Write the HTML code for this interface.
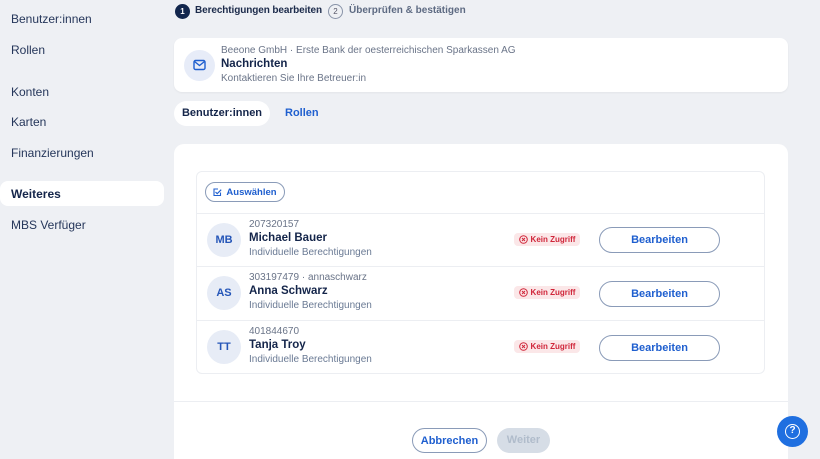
<!DOCTYPE html>
<html><head><style>
*{box-sizing:border-box;margin:0;padding:0}
html,body{width:820px;height:459px;overflow:hidden}
body{background:#eef0f4;font-family:"Liberation Sans",sans-serif;color:#1b2a4a;position:relative}
.a{position:absolute}
.nav{left:11px;font-size:12px;color:#25365a}
.btn{border:1px solid #8a9bb8;border-radius:14px;background:#fff;color:#1f5fcf;font-weight:bold;font-size:11px;display:flex;align-items:center;justify-content:center}
.row{left:197px;width:567px;height:54px;border-top:1px solid #eceef2}
.av{left:10px;top:9px;width:34px;height:34px;border-radius:50%;background:#e7ecf6;color:#2556b8;font-size:11px;font-weight:bold;display:flex;align-items:center;justify-content:center}
.id{left:52px;top:5px;font-size:10px;color:#6a7488}
.nm{left:52px;top:18px;font-size:11.5px;font-weight:bold;color:#14254a}
.sub{left:52px;top:33px;font-size:10px;color:#6a7a94}
.kz{left:317px;top:19px;height:13px;width:66px;background:#fbe7e8;border-radius:4px;color:#d0263a;font-size:8px;font-weight:bold;display:flex;align-items:center;justify-content:center;gap:3px}
</style></head><body>
<div class="a nav" style="top:12px">Benutzer:innen</div>
<div class="a nav" style="top:43px">Rollen</div>
<div class="a nav" style="top:85px">Konten</div>
<div class="a nav" style="top:115px">Karten</div>
<div class="a nav" style="top:146px">Finanzierungen</div>
<div class="a" style="left:0;top:181px;width:164px;height:25px;background:#fff;border-radius:8px"></div>
<div class="a nav" style="top:187px;font-weight:bold;color:#14254a">Weiteres</div>
<div class="a nav" style="top:218px">MBS Verfüger</div>

<div class="a" style="left:175px;top:4px;width:15px;height:15px;border-radius:50%;background:#12264d;color:#fff;font-size:8px;font-weight:bold;text-align:center;line-height:15px">1</div>
<div class="a" style="left:195px;top:5px;font-size:10px;font-weight:bold;color:#1b2a4a;letter-spacing:-0.1px">Berechtigungen bearbeiten</div>
<div class="a" style="left:317px;top:5px;font-size:9px;color:#aab">›</div>
<div class="a" style="left:328px;top:4px;width:15px;height:15px;border-radius:50%;border:1px solid #8893a8;color:#556;font-size:8px;text-align:center;line-height:13px">2</div>
<div class="a" style="left:349px;top:5px;font-size:10px;font-weight:bold;color:#5d6a82">Überprüfen &amp; bestätigen</div>

<div class="a" style="left:174px;top:38px;width:614px;height:54px;background:#fff;border-radius:8px;box-shadow:0 1px 2px rgba(0,0,0,.05)"></div>
<div class="a" style="left:184px;top:50px;width:31px;height:31px;border-radius:50%;background:#e7ecf8"></div>
<svg class="a" style="left:193px;top:59px" width="13" height="12" viewBox="0 0 13 12"><rect x="1" y="1.5" width="11" height="9" rx="1.5" fill="none" stroke="#1f5fcf" stroke-width="1.4"/><path d="M1.5 2.5 6.5 6.5 11.5 2.5" fill="none" stroke="#1f5fcf" stroke-width="1.4"/></svg>
<div class="a" style="left:221px;top:45px;font-size:10px;color:#6a7488">Beeone GmbH · Erste Bank der oesterreichischen Sparkassen AG</div>
<div class="a" style="left:221px;top:58px;font-size:11.5px;font-weight:bold;color:#14254a">Nachrichten</div>
<div class="a" style="left:221px;top:73px;font-size:10px;color:#6a7488">Kontaktieren Sie Ihre Betreuer:in</div>

<div class="a" style="left:174px;top:101px;width:96px;height:25px;background:#fff;border-radius:13px;font-size:11px;font-weight:bold;color:#14254a;text-align:center;line-height:25px">Benutzer:innen</div>
<div class="a" style="left:285px;top:107px;font-size:11px;font-weight:bold;color:#1f5fcf">Rollen</div>

<div class="a" style="left:174px;top:144px;width:614px;height:330px;background:#fff;border-radius:10px"></div>
<div class="a" style="left:196px;top:171px;width:569px;height:203px;border:1px solid #eceef2;border-radius:6px"></div>
<div class="a btn" style="left:205px;top:182px;width:80px;height:20px;font-size:9.5px;gap:4px"><svg width="9" height="9" viewBox="0 0 9 9"><path d="M7.5 4.5v3h-6.5v-6.5h4M2.5 4l1.7 1.7 4-4" fill="none" stroke="#1f5fcf" stroke-width="1.1"/></svg>Auswählen</div>

<div class="a row" style="top:213px"><div class="a av">MB</div><div class="a id">207320157</div><div class="a nm">Michael Bauer</div><div class="a sub">Individuelle Berechtigungen</div><div class="a kz"><svg width="9" height="9" viewBox="0 0 9 9"><circle cx="4.5" cy="4.5" r="3.8" fill="none" stroke="#d0263a"/><path d="M3 3l3 3M6 3l-3 3" stroke="#d0263a"/></svg>Kein Zugriff</div><div class="a btn" style="left:402px;top:13px;width:121px;height:26px">Bearbeiten</div></div>
<div class="a row" style="top:266px"><div class="a av">AS</div><div class="a id">303197479 · annaschwarz</div><div class="a nm">Anna Schwarz</div><div class="a sub">Individuelle Berechtigungen</div><div class="a kz"><svg width="9" height="9" viewBox="0 0 9 9"><circle cx="4.5" cy="4.5" r="3.8" fill="none" stroke="#d0263a"/><path d="M3 3l3 3M6 3l-3 3" stroke="#d0263a"/></svg>Kein Zugriff</div><div class="a btn" style="left:402px;top:14px;width:121px;height:26px">Bearbeiten</div></div>
<div class="a row" style="top:320px"><div class="a av">TT</div><div class="a id">401844670</div><div class="a nm">Tanja Troy</div><div class="a sub">Individuelle Berechtigungen</div><div class="a kz"><svg width="9" height="9" viewBox="0 0 9 9"><circle cx="4.5" cy="4.5" r="3.8" fill="none" stroke="#d0263a"/><path d="M3 3l3 3M6 3l-3 3" stroke="#d0263a"/></svg>Kein Zugriff</div><div class="a btn" style="left:402px;top:14px;width:121px;height:26px">Bearbeiten</div></div>

<div class="a" style="left:174px;top:401px;width:614px;height:1px;background:#eceef2"></div>
<div class="a btn" style="left:412px;top:428px;width:75px;height:25px;font-size:11px">Abbrechen</div>
<div class="a" style="left:497px;top:428px;width:53px;height:25px;border-radius:13px;background:#d6dde6;color:#b0bccb;font-size:11px;font-weight:bold;text-align:center;line-height:25px">Weiter</div>
<div class="a" style="left:777px;top:416px;width:31px;height:31px;border-radius:50%;background:#1f6fe0"></div>
<div class="a" style="left:785px;top:424px;width:15px;height:15px;border:1.5px solid #fff;border-radius:50%;color:#fff;font-size:10px;font-weight:bold;text-align:center;line-height:12px">?</div>
</body></html>
